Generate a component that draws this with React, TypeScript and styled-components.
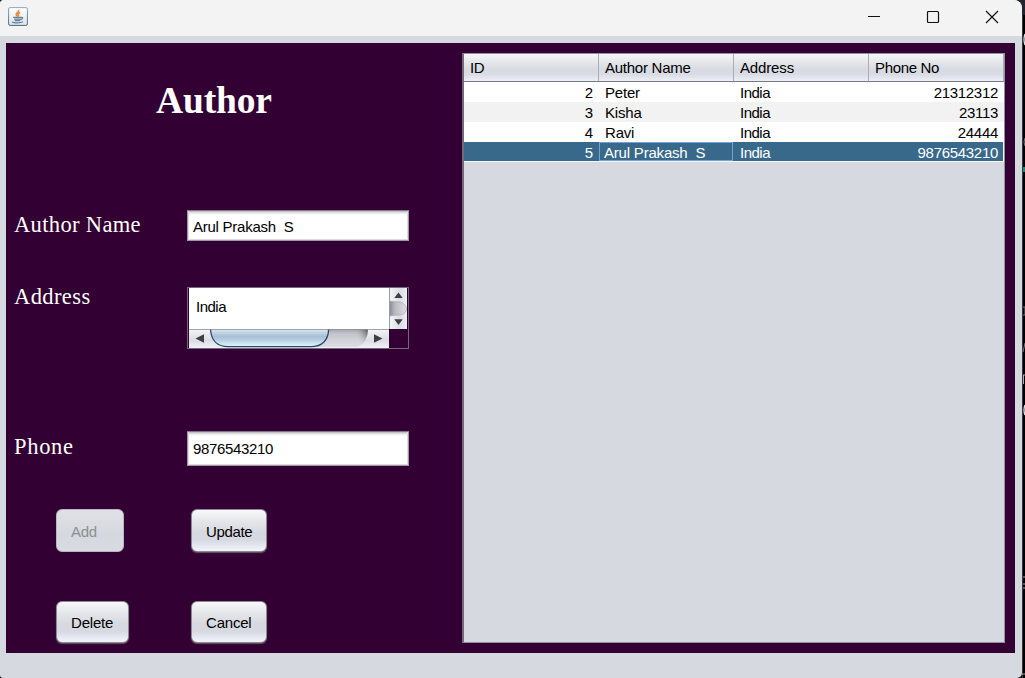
import React from "react";
import styled, { createGlobalStyle } from "styled-components";

const GlobalStyle = createGlobalStyle`
  * { box-sizing: border-box; }
  html, body { margin: 0; padding: 0; overflow: hidden; background: #000; }
  body { font-family: "Liberation Sans", Arial, sans-serif; font-size: 15px; color: #000; }
`;

const Desktop = styled.div`
  display: flex;
  width: 1025px;
  height: 678px;
  background: linear-gradient(#23232f 0 15px, #000 15px);
  overflow: hidden;
`;

const Window = styled.main`
  width: 1022px;
  height: 678px;
  flex: none;
  display: flex;
  flex-direction: column;
  background: #d6d9df;
  border-radius: 4px 8px 5px 3px;
  overflow: hidden;
`;

const Behind = styled.svg`
  display: block;
  flex: none;
`;

const TitleBar = styled.header`
  height: 36px;
  flex: none;
  display: flex;
  align-items: flex-start;
  justify-content: space-between;
  padding: 7px 23px 0 8px;
  background: #f3f3f3;
`;

const Controls = styled.div`
  display: flex;
  gap: 45px;
  padding-top: 3px;
  svg { display: block; }
`;

const Panel = styled.div`
  margin: 7px 7px 0 6px;
  height: 610px;
  display: flex;
  background: #330033;
`;

const Form = styled.section`
  width: 456px;
  height: 610px;
  flex: none;
  display: flex;
  flex-direction: column;
`;

const Heading = styled.h1`
  margin: 0;
  height: 167px;
  padding: 37px 0 0 150px;
  font: bold 37.5px/42px "Liberation Serif", "Times New Roman", serif;
  letter-spacing: -0.15px;
  color: #fff;
`;

const Row = styled.div<{ $height: number; $after: number }>`
  display: grid;
  grid-template-columns: 173px 222px;
  padding-left: 8px;
  height: ${(p) => p.$height}px;
  margin-bottom: ${(p) => p.$after}px;
`;

const Label = styled.label<{ $top: number; $spacing: number }>`
  margin-top: ${(p) => p.$top}px;
  font: 22.5px/26px "Liberation Serif", "Times New Roman", serif;
  letter-spacing: ${(p) => p.$spacing}px;
  color: #fff;
  white-space: nowrap;
`;

const Field = styled.div<{ $spacing?: number; $top?: number }>`
  display: flex;
  align-items: center;
  padding: ${(p) => p.$top ?? 2}px 0 0 5px;
  border: 1px solid #a497a8;
  border-top-color: #857989;
  background: linear-gradient(#b6b6b9 0, #e9e9e9 2px, #fff 4px);
  box-shadow: inset 1px 0 #dcdcdc, inset -1px 0 #dcdcdc, inset 0 -1px #dcdcdc;
  letter-spacing: ${(p) => p.$spacing ?? 0}px;
  white-space: pre;
`;

const ScrollPane = styled.div`
  display: grid;
  grid-template-columns: 200px 18px;
  grid-template-rows: 41px 19px;
  border: 1px solid #74677c;
  padding-left: 1px;
  > svg { display: block; }
`;

const TextArea = styled.div`
  background: #fff;
  padding: 10px 0 0 7px;
  line-height: 17px;
  letter-spacing: -0.5px;
`;

const ButtonRow = styled.div<{ $height: number; $after: number }>`
  display: grid;
  grid-template-columns: 135px 78px;
  padding-left: 50px;
  height: ${(p) => p.$height}px;
  margin-bottom: ${(p) => p.$after}px;
`;

const Button = styled.button<{ $width: number; $spacing?: number; $top?: number; $left?: number }>`
  width: ${(p) => p.$width}px;
  height: 100%;
  margin: 0;
  padding: ${(p) => p.$top ?? 2}px 0 0 ${(p) => p.$left ?? 14}px;
  text-align: left;
  font: 15px/17px "Liberation Sans", Arial, sans-serif;
  letter-spacing: ${(p) => p.$spacing ?? 0}px;
  color: #000;
  border: 1px solid #8d8992;
  border-radius: 6px;
  background: linear-gradient(#f8f8fa 0, #e4e6ea 28%, #d6d9df 55%, #d6d9e1 73%, #f3f5fb 100%);
  box-shadow: 0 1px 1px #645665;
  &:disabled {
    color: #8e8f91;
    border-color: #b9b6bd;
    background: linear-gradient(#dfe1e6, #d5d8de 60%, #d8dbe1);
    box-shadow: none;
  }
`;

const TableBox = styled.section`
  width: 543px;
  height: 590px;
  margin-top: 10px;
  border: 1px solid #8d929c;
  border-left: 2px solid #716b79;
  background: #d6d9df;
`;

const Table = styled.table`
  width: 540px;
  table-layout: fixed;
  border-collapse: separate;
  border-spacing: 0;
`;

const Th = styled.th<{ $spacing?: number }>`
  height: 28px;
  padding: 0 0 1px 6px;
  text-align: left;
  font-weight: normal;
  line-height: 17px;
  letter-spacing: ${(p) => p.$spacing ?? 0}px;
  border-right: 1px solid #a9adb5;
  border-bottom: 1px solid #747983;
  background: linear-gradient(#f6f7f9 0, #e2e4e9 35%, #d7dae0 60%, #d9dce4 75%, #eceff6 100%);
`;

const Tr = styled.tr<{ $fill: string; $selected?: boolean }>`
  background: ${(p) => p.$fill};
  color: ${(p) => (p.$selected ? "#fff" : "#000")};
`;

const Td = styled.td<{ $right?: boolean; $focus?: boolean; $last?: boolean; $spacing?: number; $selected?: boolean }>`
  height: 20px;
  padding: ${(p) => (p.$focus ? "1px 0 1px 5px" : "1px 6px 1px 6px")};
  text-align: ${(p) => (p.$right ? "right" : "left")};
  line-height: 17px;
  letter-spacing: ${(p) => p.$spacing ?? 0}px;
  white-space: pre;
  ${(p) => (p.$selected ? `box-shadow: inset 0 -1px #f4f6f8${p.$last ? ", inset -1px 0 #f4f6f8" : ""};` : "")}
  ${(p) => (p.$focus ? "box-shadow: inset 0 -1px #f4f6f8, inset 0 0 0 2px #5f92bf, inset 0 0 0 2px #39698a; background: linear-gradient(#39698a, #39698a) 1px 1px / calc(100% - 3px) calc(100% - 3px) no-repeat, #73a4d1; box-shadow: inset 0 -1px #f4f6f8, inset -1px 0 #39698a;" : "")}
`;

const rows = [
  { id: "2", name: "Peter", address: "India", phone: "21312312" },
  { id: "3", name: "Kisha", address: "India", phone: "23113" },
  { id: "4", name: "Ravi", address: "India", phone: "24444" },
  { id: "5", name: "Arul Prakash  S", address: "India", phone: "9876543210" },
];

const JavaIcon = () => (
  <svg width="20" height="20" viewBox="0 0 20 20">
    <defs>
      <linearGradient id="javaTile" x1="0" y1="0" x2="0" y2="1">
        <stop offset="0" stopColor="#fff" />
        <stop offset="1" stopColor="#dfe2e5" />
      </linearGradient>
      <linearGradient id="javaEdge" x1="0" y1="0" x2="0" y2="1">
        <stop offset="0" stopColor="#8fa7b8" />
        <stop offset="1" stopColor="#48677f" />
      </linearGradient>
    </defs>
    <rect x="0.6" y="0.6" width="18.8" height="17.8" rx="1.5" fill="url(#javaTile)" stroke="url(#javaEdge)" />
    <path d="M10.6 2.8C11.6 5 8 5.8 8.2 7.4c.1 1 1.1 1.4 1.2 2.2M12.2 5.6c-1.8.8-2.6 1.5-1.8 2.4.3.5 0 1-.4 1.4" fill="none" stroke="#e98a45" strokeWidth="1.6" />
    <path d="M5.2 10.4h8M6 12.2h6.6M6.8 13.7h5.4M13 10.4c2.4-.6 2.3 1.8-.6 2.2M4 15c2 1.2 8.4 1.2 11-.2" fill="none" stroke="#5f8199" strokeWidth="1.2" />
  </svg>
);

const VerticalBar = () => (
  <svg width="18" height="41" viewBox="0 0 18 41">
    <defs>
      <linearGradient id="vTrack" x1="0" x2="1" y1="0" y2="0">
        <stop offset="0" stopColor="#85868b" />
        <stop offset=".35" stopColor="#b9bbc0" />
        <stop offset="1" stopColor="#dcdfe4" />
      </linearGradient>
      <linearGradient id="vBtn" x1="0" x2="1" y1="0" y2="0">
        <stop offset="0" stopColor="#f5f6f8" />
        <stop offset=".6" stopColor="#dadde3" />
        <stop offset="1" stopColor="#eceff4" />
      </linearGradient>
    </defs>
    <rect width="18" height="41" fill="url(#vBtn)" />
    <path d="M0 13Q6 14 11 14Q17 16 17.5 20.5Q17 26 11 27Q6 27 0 28Z" fill="url(#vTrack)" />
    <path d="M0 13Q6 14 11 14Q17 16 17.5 20.5Q17 26 11 27Q6 27 0 28" fill="none" stroke="#a5a8ae" strokeWidth=".7" />
    <path d="M.5 0V41" stroke="#9a9ca3" />
    <path d="M9.5 4.5L13.7 10H5.3ZM5.3 31.2H13.7L9.5 37Z" fill="#3d4043" />
  </svg>
);

const HorizontalBar = () => (
  <svg width="200" height="19" viewBox="0 0 200 19">
    <defs>
      <linearGradient id="hThumb" x1="0" x2="0" y1="0" y2="1">
        <stop offset="0" stopColor="#dfe9f2" />
        <stop offset=".15" stopColor="#c9d9e7" />
        <stop offset=".42" stopColor="#a6bfd5" />
        <stop offset=".6" stopColor="#b3cce0" />
        <stop offset="1" stopColor="#e1f6ff" />
      </linearGradient>
      <linearGradient id="hBtn" x1="0" x2="0" y1="0" y2="1">
        <stop offset="0" stopColor="#f4f5f7" />
        <stop offset=".6" stopColor="#dadde3" />
        <stop offset="1" stopColor="#f0f2f6" />
      </linearGradient>
      <linearGradient id="hTrack" x1="0" x2="0" y1="0" y2="1">
        <stop offset="0" stopColor="#a2a3a8" />
        <stop offset=".25" stopColor="#c2c3c8" />
        <stop offset=".6" stopColor="#d0d2d7" />
        <stop offset="1" stopColor="#dadde3" />
      </linearGradient>
      <linearGradient id="hShade" gradientUnits="userSpaceOnUse" x1="179" y1="2" x2="168" y2="8">
        <stop offset="0" stopColor="#55565a" stopOpacity=".9" />
        <stop offset="1" stopColor="#b8b9be" stopOpacity="0" />
      </linearGradient>
    </defs>
    <rect width="200" height="19" fill="url(#hBtn)" />
    <path d="M130 0H179Q179 12 169 18H120Z" fill="url(#hTrack)" />
    <path d="M130 0H179Q179 12 169 18H120Z" fill="url(#hShade)" />
    <path d="M21.5 0C22 12 29 17.6 39 17.6H122C133 17.6 139.6 11 139.6 0Z" fill="url(#hThumb)" />
    <path d="M21.5 0C22 12 29 17.6 39 17.6H122C133 17.6 139.6 11 139.6 0" fill="none" stroke="#2b4861" strokeWidth="1.3" />
    <path d="M0 .5H200" stroke="#8c9299" strokeOpacity=".8" />
    <path d="M6.5 9.5L15 5.2V13.8ZM193.5 9.5L185 5.2V13.8Z" fill="#3d4043" />
  </svg>
);

export default function App() {
  return (
    <>
      <GlobalStyle />
      <Desktop>
        <Window>
          <TitleBar>
            <JavaIcon />
            <Controls>
              <svg width="14" height="14" viewBox="0 0 14 14"><path d="M1 6.5H13" stroke="#111" /></svg>
              <svg width="14" height="14" viewBox="0 0 14 14"><rect x="1.5" y="1.5" width="11" height="11" rx="1" fill="none" stroke="#111" strokeWidth="1.2" /></svg>
              <svg width="14" height="14" viewBox="0 0 14 14"><path d="M1 1L13 13M13 1L1 13" stroke="#111" strokeWidth="1.2" /></svg>
            </Controls>
          </TitleBar>
          <Panel>
            <Form>
              <Heading>Author</Heading>
              <Row $height={31} $after={46}>
                <Label $top={2} $spacing={0.35}>Author Name</Label>
                <Field $spacing={-0.25}>Arul Prakash  S</Field>
              </Row>
              <Row $height={62} $after={82}>
                <Label $top={-3} $spacing={0.4}>Address</Label>
                <ScrollPane>
                  <TextArea>India</TextArea>
                  <VerticalBar />
                  <HorizontalBar />
                </ScrollPane>
              </Row>
              <Row $height={35} $after={43}>
                <Label $top={3} $spacing={0.7}>Phone</Label>
                <Field $top={0} $spacing={-0.34}>9876543210</Field>
              </Row>
              <ButtonRow $height={43} $after={49}>
                <Button $width={68} $spacing={-0.3} disabled>Add</Button>
                <Button $width={76} $spacing={-0.35}>Update</Button>
              </ButtonRow>
              <ButtonRow $height={42} $after={0}>
                <Button $width={73} $top={0} $spacing={-0.2}>Delete</Button>
                <Button $width={76} $top={0} $spacing={-0.2}>Cancel</Button>
              </ButtonRow>
            </Form>
            <TableBox>
              <Table>
                <thead>
                  <tr>
                    <Th $spacing={-0.5}>ID</Th>
                    <Th $spacing={-0.25}>Author Name</Th>
                    <Th $spacing={-0.15}>Address</Th>
                    <Th $spacing={-0.35}>Phone No</Th>
                  </tr>
                </thead>
                <tbody>
                  {rows.map((r, i) => {
                    const selected = i === 3;
                    return (
                      <Tr key={r.id} $selected={selected} $fill={selected ? "#39698a" : i % 2 ? "#f2f2f2" : "#fff"}>
                        <Td $right $selected={selected}>{r.id}</Td>
                        <Td $focus={selected} $selected={selected} $spacing={-0.2}>{r.name}</Td>
                        <Td $selected={selected} $spacing={-0.5}>{r.address}</Td>
                        <Td $right $last $spacing={-0.3} $selected={selected}>{r.phone}</Td>
                      </Tr>
                    );
                  })}
                </tbody>
              </Table>
            </TableBox>
          </Panel>
        </Window>
        <Behind width="3" height="678" viewBox="0 0 3 678">
          <path d="M.5 15V678" stroke="#34363a" />
          <path d="M3 34Q1 39 3 45M3 405Q1 410 3 415" fill="none" stroke="#ddd" strokeWidth="1.4" />
          <path d="M3 138Q1 142 3 146M1 307H3V315H1M3 343L1 352" fill="none" stroke="#777" />
          <rect x="1" y="167" width="2" height="5" fill="#168a70" />
          <path d="M1 375H3M1.5 375V384M1 577H3M1 584H3M1 588H3M0 674H3" fill="none" stroke="#aaa" />
        </Behind>
      </Desktop>
    </>
  );
}
